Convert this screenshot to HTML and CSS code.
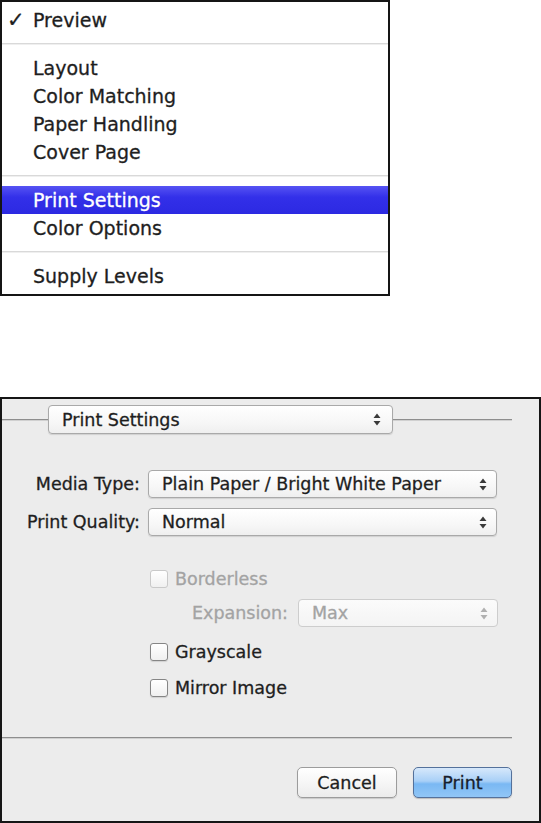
FILE: index.html
```html
<!DOCTYPE html>
<html>
<head>
<meta charset="utf-8">
<link rel="stylesheet" href="styles.css">
</head>
<body>
<div class="menu">
  <div class="item checked"><span class="check">✓</span>Preview</div>
  <div class="sep"></div>
  <div class="item">Layout</div>
  <div class="item">Color Matching</div>
  <div class="item">Paper Handling</div>
  <div class="item">Cover Page</div>
  <div class="sep"></div>
  <div class="item active">Print Settings</div>
  <div class="item">Color Options</div>
  <div class="sep"></div>
  <div class="item">Supply Levels</div>
</div>

<div class="dialog">
  <div class="top-row">
    <div class="rule rule-left"></div>
    <div class="popup popup-panel">
      <span>Print Settings</span>
      <svg class="arrows" width="8" height="13" viewBox="0 0 8 13"><path d="M4 0.5 L7.5 5 L0.5 5 Z M4 12.5 L7.5 8 L0.5 8 Z"/></svg>
    </div>
    <div class="rule rule-right"></div>
  </div>

  <div class="form">
    <div class="label">Media Type:</div>
    <div class="popup">
      <span>Plain Paper / Bright White Paper</span>
      <svg class="arrows" width="8" height="13" viewBox="0 0 8 13"><path d="M4 0.5 L7.5 5 L0.5 5 Z M4 12.5 L7.5 8 L0.5 8 Z"/></svg>
    </div>
    <div class="label">Print Quality:</div>
    <div class="popup">
      <span>Normal</span>
      <svg class="arrows" width="8" height="13" viewBox="0 0 8 13"><path d="M4 0.5 L7.5 5 L0.5 5 Z M4 12.5 L7.5 8 L0.5 8 Z"/></svg>
    </div>
  </div>

  <div class="options">
    <div class="check-row disabled"><span class="box"></span>Borderless</div>
    <div class="exp-row disabled">
      <div class="exp-label">Expansion:</div>
      <div class="popup popup-disabled">
        <span>Max</span>
        <svg class="arrows" width="8" height="13" viewBox="0 0 8 13"><path d="M4 0.5 L7.5 5 L0.5 5 Z M4 12.5 L7.5 8 L0.5 8 Z"/></svg>
      </div>
    </div>
    <div class="check-row"><span class="box"></span>Grayscale</div>
    <div class="check-row"><span class="box"></span>Mirror Image</div>
  </div>

  <div class="bottom-rule"></div>

  <div class="buttons">
    <div class="btn btn-cancel">Cancel</div>
    <div class="btn btn-print">Print</div>
  </div>
</div>
</body>
</html>
```
FILE: styles.css
```css
html, body {
  margin: 0;
  padding: 0;
  background: #ffffff;
}
body {
  width: 541px;
  height: 823px;
  overflow: hidden;
  font-family: "DejaVu Sans", "Liberation Sans", sans-serif;
  color: #1e1e1e;
  -webkit-text-stroke: 0.3px currentColor;
}

/* ---------- context menu ---------- */
.menu {
  width: 390px;
  height: 296px;
  box-sizing: border-box;
  border: 2px solid #151515;
  background: #ffffff;
  padding-top: 4px;
  font-size: 19px;
}
.item {
  height: 28px;
  line-height: 28px;
  padding-left: 31px;
  position: relative;
  white-space: nowrap;
}
.item .check {
  position: absolute;
  left: 5px;
  top: 0;
  font-size: 21px;
  font-weight: bold;
}
.item.active {
  background: linear-gradient(#5653f3, #3330e9 40%, #2c29e2);
  color: #ffffff;
}
.sep {
  height: 1px;
  margin: 9px 0 10px;
  background: #d9d9d9;
  box-shadow: 0 1px 0 #efefef;
}

/* ---------- print dialog ---------- */
.dialog {
  margin-top: 101px;
  width: 541px;
  height: 426px;
  box-sizing: border-box;
  border: 2px solid #151515;
  background: #ececec;
  font-size: 17.5px;
}
.top-row {
  display: flex;
  align-items: center;
  margin-top: 6px;
  height: 29px;
  padding-right: 27px;
}
.rule {
  height: 1px;
  background: #8e8e8e;
  box-shadow: 0 1px 0 #d0d0d0;
}
.rule-left { width: 46px; }
.rule-right { flex: 1; }

.popup {
  display: flex;
  align-items: center;
  justify-content: space-between;
  height: 28px;
  box-sizing: border-box;
  border: 1px solid #a9a9a9;
  border-radius: 4px;
  background: linear-gradient(#ffffff, #f7f7f7 60%, #efefef);
  box-shadow: 0 1px 1px rgba(0, 0, 0, 0.12);
  padding: 0 9px 0 13px;
  white-space: nowrap;
}
.popup-panel {
  width: 345px;
  height: 29px;
  padding-right: 11px;
}
.arrows { fill: #3a3a3a; }

.form {
  display: grid;
  grid-template-columns: 138px 349px;
  column-gap: 8px;
  row-gap: 10px;
  margin-top: 36px;
}
.label {
  text-align: right;
  line-height: 28px;
  white-space: nowrap;
}

.options {
  margin-top: 32px;
  padding-left: 148px;
}
.check-row {
  display: flex;
  align-items: center;
  height: 22px;
  gap: 7px;
  white-space: nowrap;
}
.box {
  width: 18px;
  height: 18px;
  box-sizing: border-box;
  border: 1px solid #858585;
  border-radius: 3px;
  background: linear-gradient(#ffffff, #f0f0f0);
  box-shadow: 0 1px 1px rgba(0, 0, 0, 0.12);
}
.disabled { color: #a3a3a3; }
.disabled .box {
  border-color: #c9c9c9;
  box-shadow: none;
}
.exp-row {
  display: flex;
  align-items: center;
  margin: 9px 0 14px;
}
.exp-label {
  width: 138px;
  text-align: right;
  margin-right: 10px;
}
.popup-disabled {
  width: 200px;
  border-color: #cdcdcd;
  box-shadow: none;
  background: linear-gradient(#fbfbfb, #f4f4f4);
}
.popup-disabled .arrows { fill: #b0b0b0; }
.options .check-row + .check-row { margin-top: 14px; }

.bottom-rule {
  margin-top: 38px;
  width: 510px;
  height: 1px;
  background: #8e8e8e;
  box-shadow: 0 1px 0 #d0d0d0;
}

.buttons {
  display: flex;
  justify-content: flex-end;
  gap: 16px;
  padding-right: 27px;
  margin-top: 29px;
}
.btn {
  height: 31px;
  width: 100px;
  box-sizing: border-box;
  border-radius: 5px;
  display: flex;
  align-items: center;
  justify-content: center;
  font-size: 17.5px;
}
.btn-cancel {
  border: 1px solid #9c9c9c;
  background: linear-gradient(#ffffff, #f6f6f6 50%, #ececec);
  box-shadow: 0 1px 1px rgba(0, 0, 0, 0.15);
}
.btn-print {
  width: 99px;
  border: 1px solid #54719b;
  background: linear-gradient(#d6e8fb, #a9d0f7 45%, #7ab8f3 55%, #91c6f6);
  color: #17202c;
  box-shadow: 0 1px 1px rgba(0, 0, 0, 0.2);
}
```
